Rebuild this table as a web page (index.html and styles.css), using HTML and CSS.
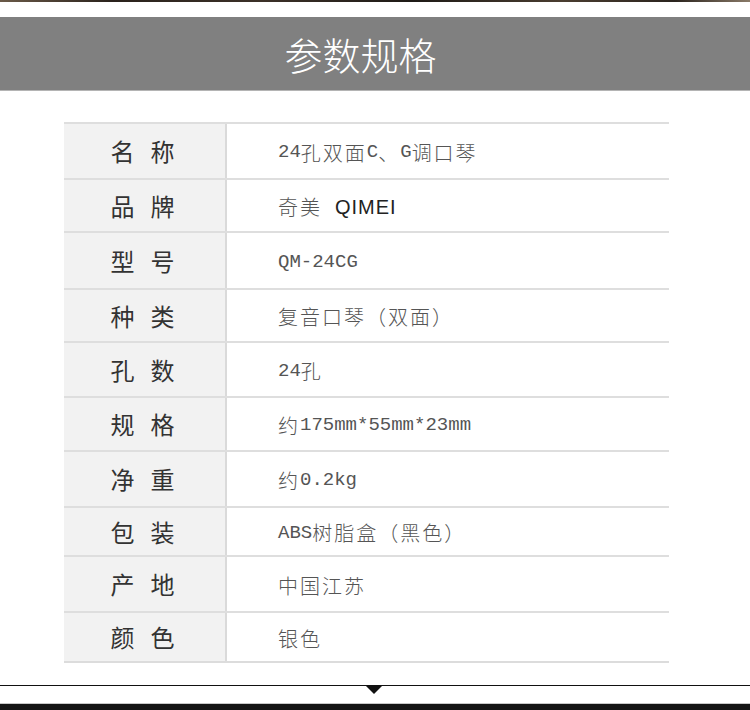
FILE: index.html
```html
<!DOCTYPE html>
<html lang="zh-CN">
<head>
<meta charset="utf-8">
<title>参数规格</title>
<link rel="stylesheet" href="styles.css">
</head>
<body>
<div class="page">
  <div class="topstrip"></div>
  <header class="banner"><h1 class="banner-title">参数规格</h1></header>
  <div class="spec">
    <div class="row"><div class="label">名称</div><div class="value"><span class="lat">24</span>孔双面<span class="lat">C</span>、<span class="lat">G</span>调口琴</div></div>
    <div class="row"><div class="label">品牌</div><div class="value">奇美<span class="sans">QIMEI</span></div></div>
    <div class="row"><div class="label">型号</div><div class="value"><span class="lat">QM-24CG</span></div></div>
    <div class="row"><div class="label">种类</div><div class="value">复音口琴（双面）</div></div>
    <div class="row"><div class="label">孔数</div><div class="value"><span class="lat">24</span>孔</div></div>
    <div class="row"><div class="label">规格</div><div class="value">约<span class="lat">175mm*55mm*23mm</span></div></div>
    <div class="row"><div class="label">净重</div><div class="value">约<span class="lat">0.2kg</span></div></div>
    <div class="row"><div class="label">包装</div><div class="value"><span class="lat">ABS</span>树脂盒（黑色）</div></div>
    <div class="row"><div class="label">产地</div><div class="value">中国江苏</div></div>
    <div class="row"><div class="label">颜色</div><div class="value">银色</div></div>
  </div>
  <div class="divider"><span class="arrow"></span></div>
  <div class="bottomband"></div>
</div>
</body>
</html>
```
FILE: styles.css
```css
* { box-sizing: border-box; }
html, body { margin: 0; padding: 0; background: #fff; }
.page {
  width: 750px;
  height: 710px;
  overflow: hidden;
  display: flex;
  flex-direction: column;
  font-family: "Noto Sans CJK SC", sans-serif;
}
.topstrip {
  height: 2px;
  background: linear-gradient(90deg, #6b5a48 0%, #2a221c 15%, #3c3128 35%, #1e1a16 55%, #4a3d30 75%, #2b241e 90%, #8a7a68 100%);
}
.banner {
  margin-top: 15px;
  height: 74px;
  background: #808080;
  border-bottom: 1px solid #b4b4b4;
  display: flex;
  align-items: center;
  justify-content: center;
  padding-right: 29px;
}
.banner-title {
  margin: 0;
  color: #fff;
  font-weight: 300;
  font-size: 38px;
  line-height: 1;
  font-family: "Noto Sans CJK SC", sans-serif;
  padding-top: 1px;
}
.spec {
  margin: 31px 0 0 64px;
  width: 605px;
  border-bottom: 2px solid #dcdcdc;
}
.row {
  display: flex;
  border-top: 2px solid #dedede;
  height: 56px;
}
.row:nth-child(1) { height: 56px; }
.row:nth-child(2) { height: 53px; }
.row:nth-child(3) { height: 57px; }
.row:nth-child(4) { height: 53px; }
.row:nth-child(5) { height: 55px; }
.row:nth-child(6) { height: 54px; }
.row:nth-child(7) { height: 56px; }
.row:nth-child(8) { height: 49px; }
.row:nth-child(9) { height: 56px; }
.row:nth-child(10) { height: 50px; }
.label {
  width: 163px;
  flex: none;
  background: #f2f2f2;
  border-right: 2px solid #dadada;
  display: flex;
  align-items: center;
  justify-content: center;
  padding-left: 12px;
  font-size: 24px;
  letter-spacing: 16px;
  color: #333;
  line-height: 1;
}
.value {
  flex: 1;
  display: flex;
  align-items: center;
  padding-left: 51px;
  padding-top: 3px;
  font-family: "Noto Sans CJK SC", sans-serif;
  font-size: 20px;
  font-weight: 300;
  letter-spacing: 2px;
  color: #555;
  line-height: 1;
  white-space: pre;
}
.lat {
  font-family: "Liberation Mono", monospace;
  font-size: 19px;
  font-weight: 400;
  letter-spacing: 0;
  color: #555;
}
.sans {
  font-family: "Liberation Sans", sans-serif;
  font-size: 20px;
  font-weight: 400;
  letter-spacing: 1px;
  color: #222;
  margin-left: 13px;
}
.divider {
  position: relative;
  margin-top: 22px;
  height: 1px;
  background: #111;
}
.arrow {
  position: absolute;
  left: 365px;
  top: 0;
  width: 0;
  height: 0;
  border-left: 9px solid transparent;
  border-right: 9px solid transparent;
  border-top: 9px solid #111;
}
.bottomband {
  margin-top: 17px;
  flex: 1;
  background: #141414;
  border-top: 1px solid #c8c8c8;
}
```
